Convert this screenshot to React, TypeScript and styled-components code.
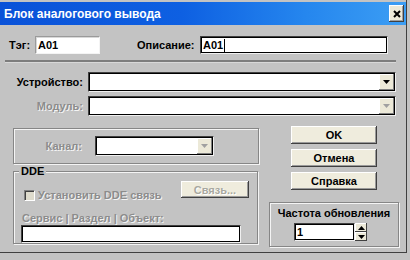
import React from "react";
import styled, { createGlobalStyle } from "styled-components";

const Global = createGlobalStyle`
  html, body { margin: 0; padding: 0; background: #c3c3c3; }
  body { width: 410px; height: 260px; overflow: hidden; }
`;

const Window = styled.div`
  width: 407px;
  height: 253px;
  box-sizing: border-box;
  background: #c3c3c3;
  border-right: 1px solid #404040;
  border-bottom: 1px solid #404040;
  display: flex;
  flex-direction: column;
  font: bold 11px "Liberation Sans", Arial, sans-serif;
  color: #000;
`;

const TitleBar = styled.div`
  margin-top: 2px;
  height: 23px;
  display: flex;
  align-items: center;
  justify-content: space-between;
  padding: 0 2px 0 4px;
  background: linear-gradient(90deg, #0a52d8 0%, #0e60e2 45%, #2586ee 75%, #3c9ef4 100%);
`;

const Title = styled.span`
  color: #fff;
  font: bold 12px "Liberation Sans", Arial, sans-serif;
`;

const CloseBtn = styled.div`
  width: 15px;
  height: 17px;
  box-sizing: border-box;
  background: #ece9d8;
  box-shadow: inset -1px -1px #404040, inset 1px 1px #fff, inset -2px -2px #a0a0a0;
  display: flex;
  align-items: center;
  justify-content: center;
`;

const Body = styled.div`
  display: flex;
  flex-direction: column;
  padding-top: 11px;
`;

const TopRow = styled.div`
  display: flex;
  align-items: center;
  padding-left: 9px;
  height: 18px;
`;

const Label = styled.span<{ $w?: number; $right?: boolean; $disabled?: boolean; $ml?: number }>`
  display: inline-block;
  white-space: nowrap;
  ${(p) => (p.$w ? `width: ${p.$w}px;` : "")}
  ${(p) => (p.$ml ? `margin-left: ${p.$ml}px;` : "")}
  text-align: ${(p) => (p.$right ? "right" : "left")};
  color: ${(p) => (p.$disabled ? "#8c8c8c" : "#000")};
  text-shadow: ${(p) => (p.$disabled ? "1px 1px 0 #f4f4f4" : "none")};
  line-height: 13px;
`;

const Field = styled.div<{ $w: number; $h?: number; $dark?: boolean }>`
  width: ${(p) => p.$w}px;
  height: ${(p) => p.$h ?? 18}px;
  box-sizing: border-box;
  background: #fff;
  border: 1px solid;
  border-color: ${(p) => (p.$dark ? "#404040 #f0f0f0 #f0f0f0 #404040" : "#9a9a9a #f4f4f4 #f4f4f4 #9a9a9a")};
  box-shadow: ${(p) => (p.$dark ? "inset 1px 1px #000, inset -1px -1px #000" : "inset 1px 1px #d8d8d8")};
  display: flex;
  align-items: center;
  padding-left: 2px;
  flex-shrink: 0;
`;

const Caret = styled.span`
  display: inline-block;
  width: 1px;
  height: 13px;
  background: #000;
  margin-left: 1px;
`;

const Separator = styled.div`
  margin: 6px 10px 0 5px;
  height: 2px;
  background: #7d7d7d;
  border-bottom: 1px solid #d8d8d8;
`;

const DeviceGrid = styled.div`
  display: grid;
  grid-template-columns: 72px 308px;
  column-gap: 5px;
  row-gap: 4px;
  align-items: center;
  margin-top: 9px;
  padding-left: 11px;
`;

const Combo = styled.div<{ $w: number }>`
  width: ${(p) => p.$w}px;
  height: 20px;
  box-sizing: border-box;
  background: #fff;
  border: 1px solid;
  border-color: #404040 #f0f0f0 #f0f0f0 #404040;
  box-shadow: inset 1px 1px #000, inset -1px -1px #000;
  display: flex;
  justify-content: flex-end;
  align-items: center;
  padding: 1px;
`;

const DropBtn = styled.div`
  width: 15px;
  height: 16px;
  box-sizing: border-box;
  background: #ece9d8;
  box-shadow: inset -1px -1px #808080, inset 1px 1px #fff;
  display: flex;
  align-items: center;
  justify-content: center;
`;

const BottomArea = styled.div`
  display: flex;
  margin-top: 10px;
  padding-left: 13px;
`;

const LeftCol = styled.div`
  display: flex;
  flex-direction: column;
  padding-top: 2px;
`;

const Group = styled.div<{ $w: number; $h: number }>`
  position: relative;
  box-sizing: border-box;
  width: ${(p) => p.$w}px;
  height: ${(p) => p.$h}px;
  border: 1px solid #868686;
  box-shadow: inset 1px 1px 0 #f4f4f4, 1px 1px 0 #f4f4f4;
`;

const ChannelGroup = styled(Group)`
  display: flex;
  align-items: center;
  gap: 13px;
`;

const DdeGroup = styled(Group)`
  margin-top: 7px;
  display: flex;
  flex-direction: column;
  padding: 9px 8px 0 10px;
`;

const Legend = styled.span`
  position: absolute;
  top: -7px;
  left: 5px;
  padding: 0 2px;
  background: #c3c3c3;
  line-height: 13px;
`;

const DdeRow = styled.div`
  display: flex;
  align-items: flex-start;
`;

const CheckWrap = styled.div`
  display: flex;
  align-items: center;
  gap: 3px;
  margin-top: 8px;
`;

const CheckBox = styled.div`
  width: 11px;
  height: 11px;
  box-sizing: border-box;
  background: #dedbcc;
  border: 1px solid;
  border-color: #808080 #fff #fff #808080;
  box-shadow: inset 1px 1px #404040;
`;

const Button = styled.div<{ $w: number; $h?: number; $disabled?: boolean; $ml?: string }>`
  width: ${(p) => p.$w}px;
  height: ${(p) => p.$h ?? 18}px;
  box-sizing: border-box;
  ${(p) => (p.$ml ? `margin-left: ${p.$ml};` : "")}
  background: #efecdd;
  box-shadow: inset -1px -1px #404040, inset 1px 1px #fff, inset -2px -2px #9a9a9a;
  display: flex;
  align-items: center;
  justify-content: center;
  color: ${(p) => (p.$disabled ? "#a8a8a0" : "#000")};
  text-shadow: ${(p) => (p.$disabled ? "1px 1px 0 #fff" : "none")};
  flex-shrink: 0;
`;

const ServiceLabel = styled(Label)`
  margin: 10px 0 0 -2px;
`;

const ServiceField = styled(Field)`
  margin-left: -3px;
`;

const RightCol = styled.div`
  width: 130px;
  margin-left: 10px;
  display: flex;
  flex-direction: column;
  align-items: center;
  gap: 5px;
`;

const FreqGroup = styled(Group)`
  margin-top: 7px;
  display: flex;
  flex-direction: column;
  align-items: center;
  padding-top: 4px;
`;

const Spinner = styled.div`
  display: flex;
  margin: 3px 7px 0 0;
`;

const SpinCol = styled.div`
  display: flex;
  flex-direction: column;
  width: 12px;
  height: 18px;
`;

const SpinBtn = styled.div`
  flex: 1;
  box-sizing: border-box;
  background: #ece9d8;
  box-shadow: inset -1px -1px #404040, inset 1px 1px #fff;
  display: flex;
  align-items: center;
  justify-content: center;
`;

const Tri = ({ up, color = "#000" }: { up?: boolean; color?: string }) => (
  <svg width="7" height="4" viewBox="0 0 7 4">
    <polygon points={up ? "3.5,0 7,4 0,4" : "0,0 7,0 3.5,4"} fill={color} />
  </svg>
);

const CloseIcon = () => (
  <svg width="8" height="8" viewBox="0 0 8 8">
    <path d="M1 1 L7 7 M7 1 L1 7" stroke="#000" strokeWidth="2" />
  </svg>
);

export default function App() {
  return (
    <>
      <Global />
      <Window>
        <TitleBar>
          <Title>Блок аналогового вывода</Title>
          <CloseBtn>
            <CloseIcon />
          </CloseBtn>
        </TitleBar>
        <Body>
          <TopRow>
            <Label $w={26}>Тэг:</Label>
            <Field $w={65}>А01</Field>
            <Label $w={63} $ml={37}>Описание:</Label>
            <Field $w={188} $dark>
              А01
              <Caret />
            </Field>
          </TopRow>
          <Separator />
          <DeviceGrid>
            <Label $right>Устройство:</Label>
            <Combo $w={308}>
              <DropBtn>
                <Tri />
              </DropBtn>
            </Combo>
            <Label $right $disabled>Модуль:</Label>
            <Combo $w={308}>
              <DropBtn>
                <Tri color="#a0a0a0" />
              </DropBtn>
            </Combo>
          </DeviceGrid>
          <BottomArea>
            <LeftCol>
              <ChannelGroup $w={246} $h={36}>
                <Label $w={68} $right $disabled>Канал:</Label>
                <Combo $w={119}>
                  <DropBtn>
                    <Tri color="#a0a0a0" />
                  </DropBtn>
                </Combo>
              </ChannelGroup>
              <DdeGroup $w={245} $h={73}>
                <Legend>DDE</Legend>
                <DdeRow>
                  <CheckWrap>
                    <CheckBox />
                    <Label $disabled>Установить DDE связь</Label>
                  </CheckWrap>
                  <Button $w={68} $h={17} $disabled $ml="auto">Связь...</Button>
                </DdeRow>
                <ServiceLabel $disabled>Сервис | Раздел | Объект:</ServiceLabel>
                <ServiceField $w={220} $dark />
              </DdeGroup>
            </LeftCol>
            <RightCol>
              <Button $w={86}>OK</Button>
              <Button $w={86}>Отмена</Button>
              <Button $w={86}>Справка</Button>
              <FreqGroup $w={130} $h={45}>
                <Label>Частота обновления</Label>
                <Spinner>
                  <Field $w={61} $dark>1</Field>
                  <SpinCol>
                    <SpinBtn>
                      <Tri up />
                    </SpinBtn>
                    <SpinBtn>
                      <Tri />
                    </SpinBtn>
                  </SpinCol>
                </Spinner>
              </FreqGroup>
            </RightCol>
          </BottomArea>
        </Body>
      </Window>
    </>
  );
}
